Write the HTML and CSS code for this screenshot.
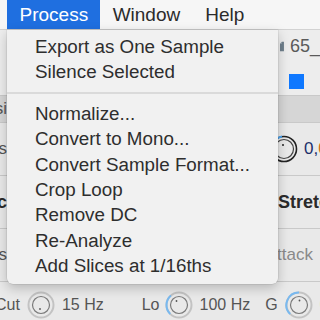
FILE: index.html
```html
<!DOCTYPE html>
<html lang="en">
<head>
  <meta charset="UTF-8" />
  <title>Process menu</title>
  <link rel="stylesheet" href="styles.css">
</head>
<body>
<div class="menubar">
  <span class="title active">Process</span>
  <span class="title">Window</span>
  <span class="title">Help</span>
</div>

<div class="window">
  <div class="row r-file">
    <div class="side"></div>
    <div class="panel">
      <svg class="doc" width="8" height="19" viewBox="0 0 8 19">
        <path d="M0 4 L4 0 L8 0 L8 19 L0 19 Z" fill="#6f7f8c"/>
        <path d="M0 4 L4 4 L4 0" fill="#9aa8b3"/>
      </svg>
      <span class="fname">65_</span>
    </div>
  </div>
  <div class="row r-color">
    <div class="side"></div>
    <div class="panel"><span class="swatch"></span></div>
  </div>
  <div class="row r-band">
    <div class="side"><span>Basi</span></div>
    <div class="panel"></div>
  </div>
  <div class="row r-tall">
    <div class="side"><span>Pitches</span></div>
    <div class="panel">
      <svg class="knob-dark" width="28" height="30" viewBox="0 0 28 30">
        <circle cx="14" cy="15" r="12.5" fill="none" stroke="#222" stroke-width="1.6"/>
        <circle cx="14" cy="15" r="9.5" fill="none" stroke="#444" stroke-width="1.2"/>
        <path d="M5.5 5.8 A12.5 12.5 0 0 1 12 2.6" fill="none" stroke="#4aa3ef" stroke-width="2"/>
        <circle cx="13" cy="11" r="1" fill="#222"/>
      </svg>
      <span class="val"><b class="navy">0,</b><b class="orange">0</b></span>
    </div>
  </div>
  <div class="row r-tall">
    <div class="side"><span class="dark">Trac</span></div>
    <div class="panel"><span class="dark">Stretch</span></div>
  </div>
  <div class="row r-tall">
    <div class="side"><span>Times</span></div>
    <div class="panel"><span class="ghost">ttack</span></div>
  </div>
</div>

<div class="bottom">
  <span class="lbl cut">Cut</span>
  <svg class="knob" width="28" height="28" viewBox="0 0 28 28">
    <circle cx="14" cy="14" r="12.5" fill="none" stroke="#c3c3c3" stroke-width="2"/>
    <circle cx="14" cy="14" r="8.5" fill="none" stroke="#7a7a7a" stroke-width="1.2"/>
    <circle cx="13" cy="18" r="0.9" fill="#555"/>
  </svg>
  <span class="lbl hz">15 Hz</span>
  <span class="divider"></span>
  <span class="lbl lo">Lo</span>
  <svg class="knob" width="28" height="28" viewBox="0 0 28 28">
    <circle cx="14" cy="14" r="12.5" fill="none" stroke="#c3c3c3" stroke-width="2"/>
    <path d="M5.2 23 A12.5 12.5 0 0 1 6 4.5" fill="none" stroke="#79b9ef" stroke-width="2"/>
    <circle cx="14" cy="14" r="8.5" fill="none" stroke="#7a7a7a" stroke-width="1.2"/>
    <circle cx="11.5" cy="10" r="0.9" fill="#555"/>
  </svg>
  <span class="lbl hz2">100 Hz</span>
  <span class="lbl g">G</span>
  <svg class="knob" width="28" height="28" viewBox="0 0 28 28">
    <circle cx="14" cy="14" r="12.5" fill="none" stroke="#c3c3c3" stroke-width="2"/>
    <path d="M5.2 23 A12.5 12.5 0 0 1 14 1.5" fill="none" stroke="#79b9ef" stroke-width="2"/>
    <circle cx="14" cy="14" r="8.5" fill="none" stroke="#7a7a7a" stroke-width="1.2"/>
    <circle cx="14.5" cy="9.5" r="0.9" fill="#555"/>
  </svg>
  <span class="lbl">0</span>
</div>

<div class="menu">
  <div class="item">Export as One Sample</div>
  <div class="item">Silence Selected</div>
  <div class="sep"></div>
  <div class="item">Normalize...</div>
  <div class="item">Convert to Mono...</div>
  <div class="item">Convert Sample Format...</div>
  <div class="item">Crop Loop</div>
  <div class="item">Remove DC</div>
  <div class="item">Re-Analyze</div>
  <div class="item">Add Slices at 1/16ths</div>
</div>
</body>
</html>
```

FILE: styles.css
```css
body {
  margin: 0;
  width: 320px;
  height: 320px;
  overflow: hidden;
  position: relative;
  background: #e9e9e9;
  font-family: 'Liberation Sans', Arial, sans-serif;
  color: #333;
}
.menubar {
  display: flex;
  height: 29px;
  padding-left: 7px;
  background: #f6f6f6;
  border-bottom: 1px solid #d2d2d2;
}
.title {
  padding: 0 12.5px;
  line-height: 29px;
  font-size: 19px;
  color: #2b2b2b;
}
.title.active {
  padding-right: 12px;
  background: #1f6fe0;
  color: white;
}
.row {
  display: flex;
  border-bottom: 1px solid #c9c9c9;
  font-size: 17px;
}
.r-file { height: 32px; border-bottom: none; background: #ededed; }
.r-color { height: 33px; background: #ededed; }
.r-band { height: 26px; background: #d6d6d6; }
.r-tall { height: 52px; }
.side {
  width: 7px;
  display: flex;
  justify-content: flex-end;
  align-items: center;
  overflow: hidden;
  white-space: nowrap;
  color: #555;
}
.panel {
  margin-left: auto;
  width: 50px;
  display: flex;
  align-items: center;
  white-space: nowrap;
  overflow: hidden;
}
.doc {
  margin-left: 10px;
}
.fname {
  margin-left: 6px;
  font-size: 18px;
  color: #5a5a5a;
}
.swatch {
  width: 15px;
  height: 15px;
  margin-left: 19px;
  margin-top: 6px;
  background: #0f78ff;
}
.knob-dark {
  flex: none;
}
.val {
  margin-left: 6px;
  font-size: 17px;
}
.val b { font-weight: normal; }
.navy { color: #1c2f6b; }
.orange { color: #d2691e; }
.dark {
  color: #2a2a2a;
  font-weight: bold;
  font-size: 18px;
}
.panel .dark { margin-left: 8px; }
.ghost {
  margin-left: 7px;
  color: #8a8a8a;
}
.bottom {
  display: flex;
  align-items: center;
  height: 32px;
  padding-top: 7px;
  white-space: nowrap;
  font-size: 16px;
}
.lbl { color: #555; }
.cut { margin-left: -5px; }
.bottom .knob { flex: none; margin: 0 7px; }
.divider {
  align-self: stretch;
  width: 1px;
  margin: -7px 9px 0 29px;
  background: #b9b9b9;
}
.lo { margin-right: -2px; }
.g { margin-left: 15px; }
.menu {
  position: absolute;
  left: 7px;
  top: 30px;
  width: 271px;
  padding: 4px 0 5px;
  background: #f1f1f1;
  border-radius: 0 0 6px 6px;
  box-shadow: 0 4px 12px rgba(0,0,0,0.22), 0 0 0 0.5px rgba(0,0,0,0.12);
}
.item {
  height: 25.4px;
  line-height: 25.4px;
  padding-left: 28px;
  font-size: 18.8px;
  color: #2e2e2e;
  white-space: nowrap;
}
.sep {
  height: 2px;
  margin: 7px 0;
  background: #dadada;
}
```
